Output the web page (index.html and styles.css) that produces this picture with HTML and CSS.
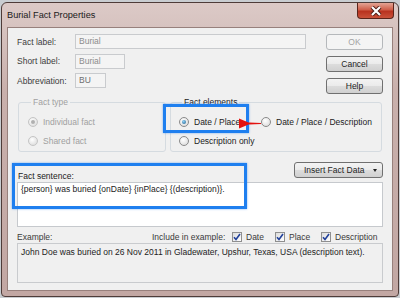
FILE: index.html
```html
<!DOCTYPE html>
<html lang="en">
<head>
  <meta charset="UTF-8">
  <title>Burial Fact Properties</title>
  <link rel="stylesheet" href="styles.css">
</head>
<body>
  <div class="window">
    <div class="titlebar">
      <span class="title">Burial Fact Properties</span>
      <span class="close">
        <svg width="14" height="10" viewBox="0 0 14 10">
          <path d="M3 1 L11 9 M11 1 L3 9" stroke="#4a1a12" stroke-width="4" />
          <path d="M3 1 L11 9 M11 1 L3 9" stroke="#ffffff" stroke-width="2.2" />
        </svg>
      </span>
    </div>

    <div class="client">
      <div class="top">
        <div class="fields">
          <label>Fact label:</label>
          <div class="input wide">Burial</div>
          <label>Short label:</label>
          <div class="input short">Burial</div>
          <label>Abbreviation:</label>
          <div class="input abbr">BU</div>
        </div>
        <div class="buttons">
          <div class="btn disabled">OK</div>
          <div class="btn">Cancel</div>
          <div class="btn">Help</div>
        </div>
      </div>

      <div class="groups">
        <fieldset class="group type">
          <legend>Fact type</legend>
          <div class="opt"><span class="radio checked"></span>Individual fact</div>
          <div class="opt"><span class="radio"></span>Shared fact</div>
        </fieldset>
        <fieldset class="group elements">
          <legend>Fact elements</legend>
          <div class="opt-grid">
            <div class="opt"><span class="radio checked"></span>Date / Place</div>
            <div class="opt"><span class="radio"></span>Date / Place / Description</div>
            <div class="opt"><span class="radio"></span>Description only</div>
          </div>
        </fieldset>
      </div>

      <div class="sentence-head">
        <span class="caption">Fact sentence:</span>
        <div class="btn insert">Insert Fact Data <span class="caret"></span></div>
      </div>
      <div class="textbox sentence">{person} was buried {onDate} {inPlace} {(description)}.</div>

      <div class="example-head">
        <span>Example:</span>
        <span>Include in example:</span>
        <span class="check-item"><span class="check"><svg width="8" height="8" viewBox="0 0 8 8"><path d="M1 4.2 L3 6.5 L7 1" fill="none" stroke="#21409a" stroke-width="1.6"/></svg></span>Date</span>
        <span class="check-item"><span class="check"><svg width="8" height="8" viewBox="0 0 8 8"><path d="M1 4.2 L3 6.5 L7 1" fill="none" stroke="#21409a" stroke-width="1.6"/></svg></span>Place</span>
        <span class="check-item"><span class="check"><svg width="8" height="8" viewBox="0 0 8 8"><path d="M1 4.2 L3 6.5 L7 1" fill="none" stroke="#21409a" stroke-width="1.6"/></svg></span>Description</span>
      </div>
      <div class="textbox example">John Doe was buried on 26 Nov 2011 in Gladewater, Upshur, Texas, USA (description text).</div>

      <!-- annotations drawn over the dialog -->
      <div class="mark mark-elements"></div>
      <div class="mark mark-sentence"></div>
      <svg class="arrow" width="24" height="11" viewBox="0 0 24 11">
        <path d="M1 0.5 L13 5.5 L1 10.5 Z M11 4.6 L23 5 L23 6 L11 6.4 Z" fill="#e3120f" />
      </svg>
    </div>
  </div>
</body>
</html>
```

FILE: styles.css
```css
body {
  margin: 0;
  background-color: #c9cdd1;
  font-family: 'Liberation Sans', Arial, sans-serif;
  font-size: 8.5px;
  color: #222222;
}

.window {
  box-sizing: border-box;
  width: 398px;
  height: 295px;
  margin: 2px 0 0 1px;
  border: 1px solid #4e3c39;
  border-radius: 6px 6px 4px 4px;
  background: linear-gradient(#dccac7, #c9b0ac 30%, #c2a7a3);
  display: flex;
  flex-direction: column;
}

.titlebar {
  height: 24px;
  display: flex;
  justify-content: space-between;
  align-items: flex-start;
  padding: 0 4px 0 5px;
}

.title {
  font-size: 9.2px;
  color: #1b1b1b;
  line-height: 24px;
}

.close {
  width: 37px;
  height: 16px;
  box-sizing: border-box;
  border: 1px solid #5a241b;
  border-top: none;
  border-radius: 0 0 4px 4px;
  background: linear-gradient(#e4a595, #cf5e49 45%, #b8321f 55%, #c9513a);
  display: flex;
  justify-content: center;
  align-items: center;
}

.client {
  position: relative;
  flex: 1;
  margin: 0 5px 5px 5px;
  border: 1px solid #97807c;
  background-color: #f0f0f0;
  padding: 6px 9px 0 9px;
}

.top {
  display: flex;
  justify-content: space-between;
}

.fields {
  display: grid;
  grid-template-columns: 58px auto;
  grid-template-rows: 15px 15px 15px;
  row-gap: 4.5px;
  align-items: center;
  justify-items: start;
  color: #3c3c3c;
}

.input {
  box-sizing: border-box;
  height: 15px;
  line-height: 13px;
  padding: 0 3px;
  border: 1px solid #c9cbce;
  background-color: #f4f4f4;
  color: #8c8c8c;
}

.input.wide { width: 231px; }
.input.short { width: 50px; }
.input.abbr { width: 31px; color: #6e6e6e; }

.buttons {
  display: flex;
  flex-direction: column;
  gap: 6px;
}

.btn {
  box-sizing: border-box;
  width: 57px;
  height: 16px;
  line-height: 14px;
  text-align: center;
  border: 1px solid #707070;
  border-radius: 3px;
  background: linear-gradient(#f3f3f3, #ebebeb 48%, #dcdcdc 52%, #d0d0d0);
  color: #1e1e1e;
}

.btn.disabled {
  border-color: #b5b8bb;
  background: #f4f4f4;
  color: #a3a3a3;
}

.groups {
  display: flex;
  gap: 4px;
  margin: 3px 0 0 1px;
}

.group {
  box-sizing: border-box;
  height: 55px;
  margin: 0;
  padding: 8px 0 0 9px;
  border: 1px solid #d5dbe0;
  border-radius: 3px;
}

.group legend {
  margin-left: 3px;
  padding: 0 2px;
  line-height: 10px;
}

.group.type {
  width: 148px;
  color: #a0a0a0;
}

.group.elements {
  width: 212px;
  padding-left: 8px;
}

.opt {
  display: flex;
  align-items: center;
  gap: 5px;
  height: 13px;
  margin-bottom: 6px;
  white-space: nowrap;
}

.opt-grid {
  display: grid;
  grid-template-columns: 82px auto;
}

.radio {
  box-sizing: border-box;
  width: 10px;
  height: 10px;
  border-radius: 50%;
  border: 1px solid #8a8a8a;
  background: radial-gradient(circle at 40% 35%, #ffffff, #e2e2e2 70%);
  display: flex;
  justify-content: center;
  align-items: center;
}

.radio.checked::after {
  content: "";
  width: 4px;
  height: 4px;
  border-radius: 50%;
  background: radial-gradient(circle at 40% 35%, #8fd0f5, #1a5c8a);
}

.type .radio {
  border-color: #c4c4c4;
}

.type .radio.checked::after {
  background: #b0b0b0;
}

.sentence-head {
  display: flex;
  justify-content: space-between;
  align-items: flex-end;
  margin-top: 10px;
}

.caption {
  margin-left: 1px;
  margin-bottom: -3px;
  line-height: 10px;
}

.btn.insert {
  width: 89px;
  text-align: left;
  padding-left: 9px;
  display: flex;
  align-items: center;
  justify-content: space-between;
  padding-right: 5px;
}

.caret {
  width: 0;
  height: 0;
  border-left: 2.5px solid transparent;
  border-right: 2.5px solid transparent;
  border-top: 3px solid #222;
}

.textbox {
  box-sizing: border-box;
  border: 1px solid #c6c9cd;
  padding: 1px 3px;
  line-height: 10px;
  white-space: nowrap;
}

.textbox.sentence {
  margin-top: 4px;
  height: 45px;
  background-color: #ffffff;
  padding-top: 1px;
}

.example-head {
  display: grid;
  grid-template-columns: 135px 80px 43px 46px auto;
  align-items: center;
  height: 11px;
  margin-top: 4px;
  color: #3a3a3a;
}

.check-item {
  display: flex;
  align-items: center;
  gap: 4px;
  white-space: nowrap;
}

.check {
  box-sizing: border-box;
  width: 10px;
  height: 10px;
  border: 1px solid #8f8f8f;
  background: linear-gradient(135deg, #dcdcdc, #ffffff);
  display: flex;
  justify-content: center;
  align-items: center;
}

.textbox.example {
  margin-top: 1px;
  height: 40px;
  padding-top: 3px;
  background-color: #f0f0f0;
  border-color: #c9cbce;
}

.mark {
  position: absolute;
  border: 3px solid #1f7fef;
  box-shadow: 0 0 2px rgba(31, 127, 239, 0.6);
}

.mark-elements {
  left: 155px;
  top: 76px;
  width: 80px;
  height: 23px;
}

.mark-sentence {
  left: 4px;
  top: 135px;
  width: 229px;
  height: 40px;
}

.arrow {
  position: absolute;
  left: 230px;
  top: 90px;
}
```
